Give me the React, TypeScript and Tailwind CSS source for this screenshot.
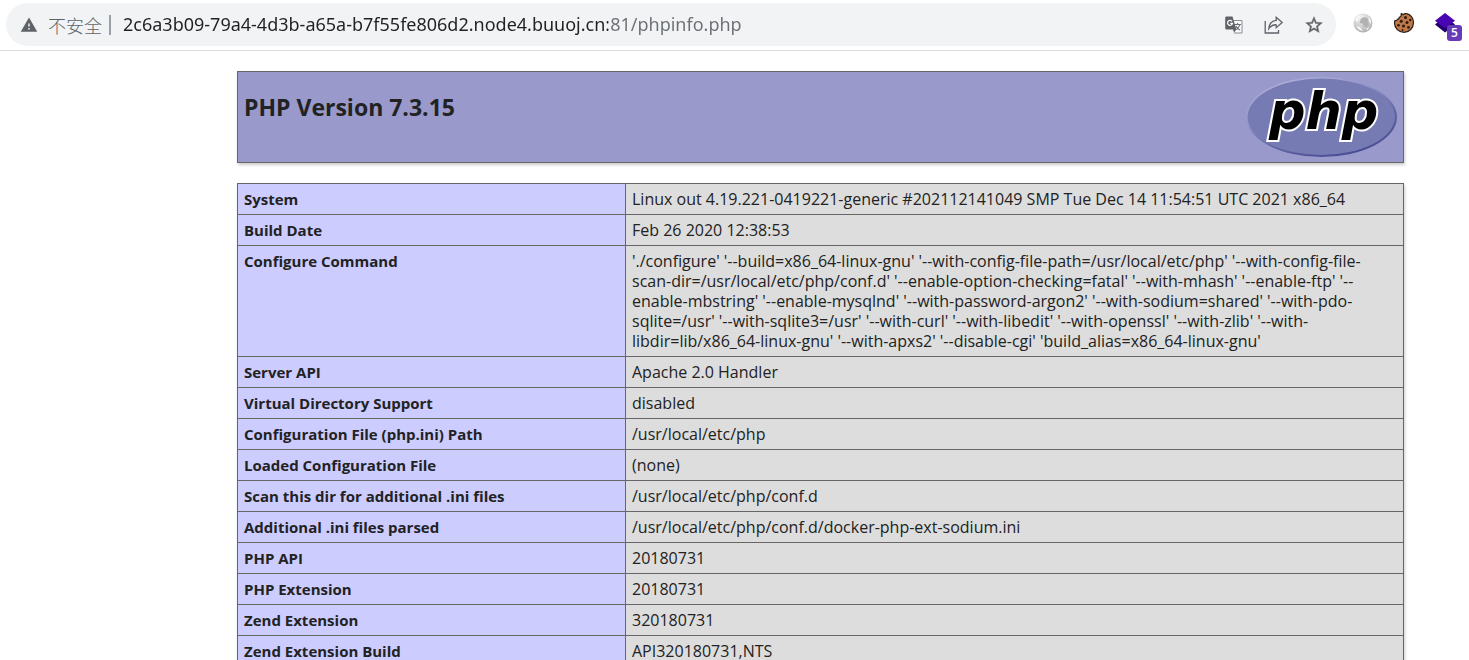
import { MdStarOutline, MdWarning } from "react-icons/md";

const rows: [string, string][] = [
  ["System", "Linux out 4.19.221-0419221-generic #202112141049 SMP Tue Dec 14 11:54:51 UTC 2021 x86_64"],
  ["Build Date", "Feb 26 2020 12:38:53"],
  [
    "Configure Command",
    "'./configure' '--build=x86_64-linux-gnu' '--with-config-file-path=/usr/local/etc/php' '--with-config-file-\nscan-dir=/usr/local/etc/php/conf.d' '--enable-option-checking=fatal' '--with-mhash' '--enable-ftp' '--\nenable-mbstring' '--enable-mysqlnd' '--with-password-argon2' '--with-sodium=shared' '--with-pdo-\nsqlite=/usr' '--with-sqlite3=/usr' '--with-curl' '--with-libedit' '--with-openssl' '--with-zlib' '--with-\nlibdir=lib/x86_64-linux-gnu' '--with-apxs2' '--disable-cgi' 'build_alias=x86_64-linux-gnu'",
  ],
  ["Server API", "Apache 2.0 Handler"],
  ["Virtual Directory Support", "disabled"],
  ["Configuration File (php.ini) Path", "/usr/local/etc/php"],
  ["Loaded Configuration File", "(none)"],
  ["Scan this dir for additional .ini files", "/usr/local/etc/php/conf.d"],
  ["Additional .ini files parsed", "/usr/local/etc/php/conf.d/docker-php-ext-sodium.ini"],
  ["PHP API", "20180731"],
  ["PHP Extension", "20180731"],
  ["Zend Extension", "320180731"],
  ["Zend Extension Build", "API320180731,NTS"],
];

function TranslateIcon() {
  return (
    <svg width="20" height="20" viewBox="0 0 20 20" aria-hidden="true">
      <path d="M9.5 5.5h8.5v12.5h-8" fill="#f8f9fa" stroke="#8a8d91" strokeWidth="1" />
      <path d="M10.5 9.500h6.500M13.500 8v1.500M15.700 9.500c-.6 2.600-2.300 4.500-4.700 5.500M11.800 11c.8 1.700 2.300 3 4.200 4" fill="none" stroke="#6b6e72" strokeWidth="1.100" />
      <path d="M2.500 1.500h6l3.800 12.700-2.300 3.600-1-3.300H2.500a1.300 1.300 0 0 1-1.300-1.300V2.800a1.300 1.300 0 0 1 1.300-1.300z" fill="#5f6368" />
      <path d="M8 6.300a2.500 2.500 0 1 0 .5 2H6.300" fill="none" stroke="#fff" strokeWidth="1.200" />
    </svg>
  );
}

function ShareIcon() {
  return (
    <svg width="20" height="20" viewBox="0 0 20 20" aria-hidden="true" fill="none" stroke="#5f6368" strokeWidth="1.300">
      <path d="M1.200 6v12h13.300v-3" />
      <path d="M12.200 2.300 18.200 7.500l-6 5.200V9.800C8.800 9.500 6.800 11 4.800 13.700 5.300 9 8 5.800 12.200 5.300z" strokeLinejoin="miter" />
    </svg>
  );
}

function GlobeIcon() {
  return (
    <svg width="20" height="20" viewBox="0 0 20 20" aria-hidden="true">
      <defs>
        <radialGradient id="globe" cx="0.4" cy="0.25" r="0.85">
          <stop offset="0" stopColor="#f2f2f2" />
          <stop offset="0.6" stopColor="#c9c9c9" />
          <stop offset="1" stopColor="#a5a5a5" />
        </radialGradient>
      </defs>
      <circle cx="10" cy="10" r="9.500" fill="url(#globe)" />
      <path d="M8 5.500 12 4l3.500 2-.5 3 1 2-2 3.500-3-1-1.500-3L6.500 10z" fill="#b2b2b2" />
      <path d="M1.500 7 4.500 3l4-1-3 4-1 3zM15 3.500l3 4-.5 4-1.500-4zM3 13l4 1 3 4-3.500-1zM13 16l3.500-2-2 3z" fill="#f7f7f7" />
    </svg>
  );
}

function CookieIcon() {
  return (
    <svg width="22" height="22" viewBox="0 0 22 22" aria-hidden="true">
      <path
        d="M8.300 1.600c1 .1 1 .8 1.700 1.100.8-.8 2-1.300 3.300-1.100C17.500 2.200 20.500 6 20.500 10.500c0 5.500-4.200 9.800-9.500 9.800S1.500 16.300 1.500 11c0-.9.200-1.800.5-2.500 1 .3 2-.2 2.300-1.200 1.200 0 2-.9 2-2C7.500 5 8.500 3.300 8.300 1.600z"
        fill="#c07848"
        stroke="#2b211b"
        strokeWidth="1.200"
      />
      <g fill="#2b1a12">
        <circle cx="12.500" cy="5.500" r="1.500" />
        <circle cx="8.200" cy="9.300" r="1.500" />
        <circle cx="14" cy="10.500" r="1.500" />
        <circle cx="5.500" cy="13.300" r="1.300" />
        <circle cx="10.500" cy="14" r="1.500" />
        <circle cx="17.300" cy="8" r="1.200" />
        <circle cx="15.500" cy="15.300" r="1.400" />
        <circle cx="9.500" cy="18" r="0.900" />
      </g>
    </svg>
  );
}

function LayersIcon() {
  return (
    <svg width="20" height="20" viewBox="0 0 20 20" aria-hidden="true">
      <path d="M0 11.500 3 9l14 0 3 2.500-10 8z" fill="#23006b" />
      <path d="M10 0 20 7.700l-10 7.600L0 7.700z" fill="#4a05b3" />
    </svg>
  );
}

function PhpLogo() {
  return (
    <svg className="h-20 w-[151px] shrink-0" viewBox="0 0 151 80" role="img" aria-label="PHP logo">
      <defs>
        <linearGradient id="rim" x1="0.2" y1="0" x2="0.8" y2="1">
          <stop offset="0" stopColor="#b3b5dc" />
          <stop offset="0.35" stopColor="#9294c6" />
          <stop offset="0.65" stopColor="#6265a4" />
          <stop offset="1" stopColor="#44478f" />
        </linearGradient>
      </defs>
      <ellipse cx="75.500" cy="40" rx="75.500" ry="40" fill="url(#rim)" />
      <ellipse cx="75.300" cy="39.800" rx="73.700" ry="38.200" fill="#777bb3" />
      <text
        x="23"
        y="52"
        fontFamily="DejaVu Sans, sans-serif"
        fontSize="51"
        fontWeight="700"
        fontStyle="italic"
        fill="#000"
        stroke="#fff"
        strokeWidth="4"
        strokeLinejoin="miter"
        paintOrder="stroke"
      >
        php
      </text>
    </svg>
  );
}

export default function App() {
  return (
    <div className="min-h-screen bg-white font-['Open_Sans','Noto_Sans_CJK_SC',sans-serif] text-[#222222]">
      <header className="flex h-[51px] items-start border-b border-[#dadce0] pt-[3px] pr-[6px] pl-[6px]">
        <div className="flex h-[43px] min-w-0 flex-1 items-center rounded-full bg-[#f1f3f4] pr-3 pl-[14px]">
          <MdWarning className="size-[18px] shrink-0 text-[#5f6368]" aria-hidden="true" />
          <label
            htmlFor="address"
            className="ml-[10px] shrink-0 font-['Noto_Sans_CJK_SC',sans-serif] text-[18px] leading-6 font-light text-[#5f6368]"
          >
            不安全
          </label>
          <span className="ml-[7px] h-5 w-[2px] shrink-0 bg-[#9aa0a6]" />
          <input
            id="address"
            type="text"
            spellCheck={false}
            defaultValue="2c6a3b09-79a4-4d3b-a65a-b7f55fe806d2.node4.buuoj.cn:81/phpinfo.php"
            className="ml-3 h-8 min-w-0 flex-1 bg-[linear-gradient(to_right,#202124_485px,#6b6f74_485px)] bg-clip-text pb-[2px] font-['Noto_Sans',sans-serif] text-[18px] text-transparent caret-black outline-none"
          />
          <div className="flex items-center gap-5">
            <button type="button" aria-label="Translate this page" className="size-5">
              <TranslateIcon />
            </button>
            <button type="button" aria-label="Share this page" className="size-5">
              <ShareIcon />
            </button>
            <button type="button" aria-label="Bookmark this page" className="size-5 text-[#5f6368]">
              <MdStarOutline className="size-5" stroke="currentColor" strokeWidth="0.5" />
            </button>
          </div>
        </div>
        <div className="ml-[17px] flex h-10 items-center gap-5">
          <button type="button" aria-label="Globe extension" className="size-5">
            <GlobeIcon />
          </button>
          <button type="button" aria-label="Cookie editor" className="size-[22px]">
            <CookieIcon />
          </button>
          <button type="button" aria-label="Layers extension" className="relative mr-2 size-5">
            <LayersIcon />
            <span className="absolute top-3 left-3 flex h-4 w-[15px] items-center justify-center rounded-[3px] bg-[#673ab7] text-[12px] leading-4 font-semibold text-white">
              5
            </span>
          </button>
        </div>
      </header>

      <main className="pt-5 pr-[65px] pl-[237px] leading-5">
        <div className="flex h-[92px] items-start justify-between border border-[#666666] bg-[#9999cc] px-[6px] pt-[5px] shadow-[1px_2px_3px_#cccccc]">
          <h1 className="pt-[14px] text-[23px] leading-8 font-bold">PHP Version 7.3.15</h1>
          <PhpLogo />
        </div>

        <table className="mt-5 w-full table-fixed border-collapse shadow-[1px_2px_3px_#cccccc]">
          <colgroup>
            <col className="w-[388px]" />
            <col />
          </colgroup>
          <tbody>
            {rows.map(([name, value]) => (
              <tr key={name}>
                <th
                  scope="row"
                  className="border border-[#666666] bg-[#ccccff] px-[6px] py-[5px] text-left align-top text-[15px] leading-5 font-bold"
                >
                  {name}
                </th>
                <td className="border border-[#666666] bg-[#dddddd] px-[6px] py-[5px] align-top text-[16px] leading-5 whitespace-pre-line">
                  {value}
                </td>
              </tr>
            ))}
          </tbody>
        </table>
      </main>
    </div>
  );
}
